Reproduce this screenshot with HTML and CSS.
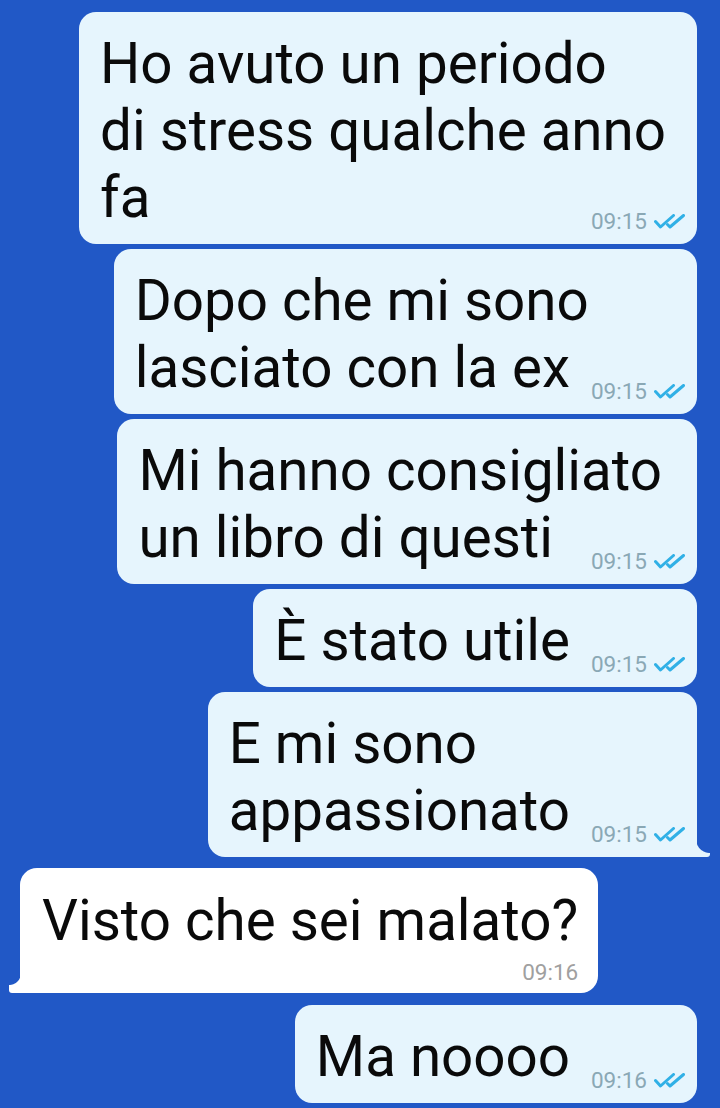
FILE: index.html
```html
<!doctype html>
<html lang="it">
 <head>
  <meta charset="UTF-8">
  <meta name="viewport" content="width=device-width, initial-scale=1.0">
  <title>Chat</title>
  <link rel="stylesheet" href="styles.css">
 </head>
 <body>
  <div class="chat">
   <div class="msg out wide">
    <p class="text">Ho avuto un periodo<br>di stress qualche anno<br>fa<span class="spacer"></span></p>
    <span class="meta"><span class="time">09:15</span><svg class="ticks" viewBox="0 0 31 15"><polyline points="1.5,7.5 6.5,13 19.5,1.5"/><polyline points="13.5,10.5 16,13 29.5,1.5"/></svg></span>
   </div>
   <div class="msg out">
    <p class="text">Dopo che mi sono<br>lasciato con la ex<span class="spacer"></span></p>
    <span class="meta"><span class="time">09:15</span><svg class="ticks" viewBox="0 0 31 15"><polyline points="1.5,7.5 6.5,13 19.5,1.5"/><polyline points="13.5,10.5 16,13 29.5,1.5"/></svg></span>
   </div>
   <div class="msg out">
    <p class="text">Mi hanno consigliato<br>un libro di questi<span class="spacer"></span></p>
    <span class="meta"><span class="time">09:15</span><svg class="ticks" viewBox="0 0 31 15"><polyline points="1.5,7.5 6.5,13 19.5,1.5"/><polyline points="13.5,10.5 16,13 29.5,1.5"/></svg></span>
   </div>
   <div class="msg out">
    <p class="text">È stato utile<span class="spacer"></span></p>
    <span class="meta"><span class="time">09:15</span><svg class="ticks" viewBox="0 0 31 15"><polyline points="1.5,7.5 6.5,13 19.5,1.5"/><polyline points="13.5,10.5 16,13 29.5,1.5"/></svg></span>
   </div>
   <div class="msg out tail">
    <p class="text">E mi sono<br>appassionato<span class="spacer"></span></p>
    <span class="meta"><span class="time">09:15</span><svg class="ticks" viewBox="0 0 31 15"><polyline points="1.5,7.5 6.5,13 19.5,1.5"/><polyline points="13.5,10.5 16,13 29.5,1.5"/></svg></span>
   </div>
   <div class="msg in tail">
    <p class="text">Visto che sei malato?</p>
    <div class="meta-row"><span class="time">09:16</span></div>
   </div>
   <div class="msg out">
    <p class="text">Ma noooo<span class="spacer"></span></p>
    <span class="meta"><span class="time">09:16</span><svg class="ticks" viewBox="0 0 31 15"><polyline points="1.5,7.5 6.5,13 19.5,1.5"/><polyline points="13.5,10.5 16,13 29.5,1.5"/></svg></span>
   </div>
   <div class="msg out next"></div>
  </div>
 </body>
</html>
```

FILE: styles.css
```css
:root {
  --chat-bg: #2158c6;
  --out-bg: #e6f5fd;
  --in-bg: #ffffff;
  --tick: #30b0e6;
}

* {
  margin: 0;
  padding: 0;
  box-sizing: border-box;
}

body {
  background: var(--chat-bg);
  font-family: Roboto, 'Noto Sans', sans-serif;
  color: #0a0a0a;
  overflow: hidden;
}

.chat {
  display: flex;
  flex-direction: column;
  align-items: flex-end;
  gap: 5px;
  padding: 12px 23px 0 20px;
}

.msg {
  position: relative;
  border-radius: 17px;
  padding: 19px 35px 12px 21px;
}

.msg.wide {
  padding-right: 31px;
}

.msg.out {
  background: var(--out-bg);
}

.msg.in {
  background: var(--in-bg);
  align-self: flex-start;
  padding: 20px 20px 9px 22px;
  margin: 6px 0 7px;
}

.text {
  font-size: 56.5px;
  line-height: 67px;
  white-space: nowrap;
}

.spacer {
  display: inline-block;
  width: 92px;
  height: 1px;
}

.meta {
  position: absolute;
  right: 12px;
  bottom: 11px;
  display: flex;
  align-items: center;
  gap: 7px;
}

.time {
  font-size: 22.5px;
  line-height: 24px;
  color: #8aa8b5;
}

.meta-row {
  margin-top: 5px;
  text-align: right;
}

.meta-row .time {
  color: #a0a0a0;
}

.ticks {
  width: 31px;
  height: 15px;
  fill: none;
  stroke: var(--tick);
  stroke-width: 3;
  stroke-linecap: round;
  stroke-linejoin: round;
}

/* bubble tails */
.msg.out.tail {
  border-bottom-right-radius: 0;
}

.msg.out.tail::after {
  content: '';
  position: absolute;
  right: -13px;
  bottom: 0;
  width: 14px;
  height: 18px;
  background: radial-gradient(circle at 100% 0, transparent 13.5px, var(--out-bg) 14.5px);
  border-bottom-right-radius: 3px;
}

.msg.in.tail {
  border-bottom-left-radius: 0;
}

.msg.in.tail::after {
  content: '';
  position: absolute;
  left: -11px;
  bottom: 0;
  width: 12px;
  height: 20px;
  background: radial-gradient(circle at 0 0, transparent 11.5px, var(--in-bg) 12.5px);
  border-bottom-left-radius: 3px;
}

.msg.next {
  width: 573px;
  height: 120px;
  margin-right: 7px;
}
```
